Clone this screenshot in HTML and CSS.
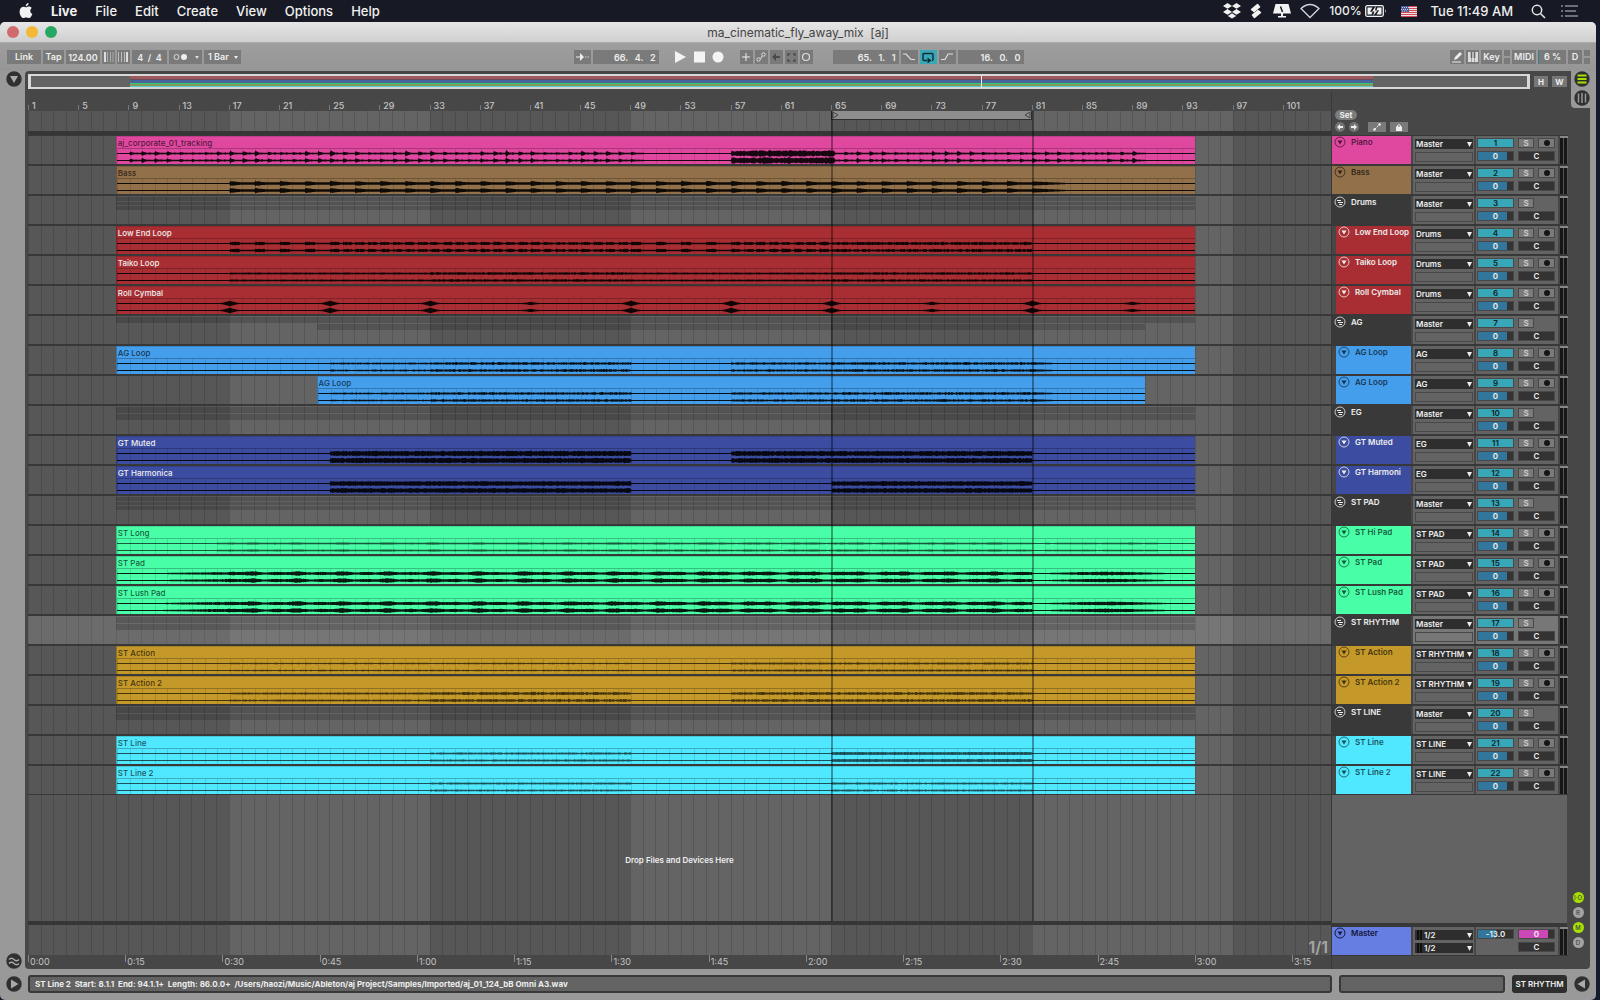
FILE: index.html
```html
<!DOCTYPE html>
<html lang="en">
<head>
<meta charset="utf-8">
<title>ma_cinematic_fly_away_mix [aj]</title>
<link rel="stylesheet" href="styles.css">
</head>
<body>
<nav class="menubar" aria-label="Menu bar">
  <div class="menus">
    <svg class="apple" viewBox="0 0 14 16" width="14" height="16"><path fill="#f2f2f2" d="M9.6 0c.1 1.700-1.300 3.300-2.900 3.300C6.500 1.700 8 .2 9.600 0zM7 4.300c.7 0 1.600-.8 3-.8 1.100 0 2.200.6 2.900 1.600-2.400 1.400-2 4.900.5 5.900-.6 1.700-2 4.100-3.400 4.100-1.100 0-1.500-.7-2.800-.7s-1.800.7-2.800.7C2.600 15.100.6 11.700.6 8.700c0-3.200 2-4.900 3.900-4.900 1.100 0 1.900.5 2.500.5z"/></svg>
    <a class="app" href="#">Live</a><a href="#">File</a><a href="#">Edit</a><a href="#">Create</a><a href="#">View</a><a href="#">Options</a><a href="#">Help</a>
  </div>
  <div class="extras">
    <svg width="18" height="16" viewBox="0 0 18 16" fill="#f2f2f2"><path d="M4.500 0 9 2.900 4.500 5.800 0 2.900zM13.500 0 18 2.900 13.500 5.800 9 2.900zM4.500 6 9 8.900 4.500 11.800 0 8.900zM13.500 6 18 8.900 13.500 11.800 9 8.900zM9 10.200l4.200 2.700L9 15.600l-4.200-2.700z"/></svg>
    <svg class="ex-s" width="12" height="16" viewBox="0 0 12 16" fill="#f2f2f2" stroke="#f2f2f2" stroke-width="1.500" stroke-linejoin="round"><path d="M7.500 1.500l2 2.500L4 8.500 1.500 6.500zM4.500 14.500l-2-2.500L8 7.500l2.500 2z"/></svg>
    <svg class="ex-d" width="18" height="16" viewBox="0 0 18 16"><path fill="#f2f2f2" d="M2.500 1h13L18 10.500H0zM8 10h2v3h3v1.500H5V13h3z"/><path d="M7.500 3.500 9.500 9" stroke="#171a24" stroke-width="1.500"/></svg>
    <svg class="ex-w" width="20" height="16" viewBox="0 0 20 16"><path d="M1 5.500Q10-2.500 19 5.500L10 14.500z" fill="none" stroke="#d5d5d8" stroke-width="1.300"/></svg>
    <span class="pct">100%</span>
    <svg class="ex-b" width="22" height="14" viewBox="0 0 22 14"><rect x=".7" y="1.700" width="17.600" height="10.600" rx="1.500" fill="none" stroke="#f2f2f2" stroke-width="1.300"/><path d="M2.500 3.500h5L5 7.800h2.500L6.500 10.500h-4zM16.500 10.500h-5L14 6.300h-2.500l1-2.800h4z" fill="#f2f2f2"/><path d="M11 2 7 7.600h2.500L8 12l4.500-5.500H10z" fill="#f2f2f2"/><path d="M20 5v4q1.500-2 0-4z" fill="#f2f2f2"/></svg>
    <svg class="ex-f" width="16" height="11" viewBox="0 0 16 11"><path fill="#eee3e3" d="M0 0h16v11H0z"/><path stroke="#d34a55" d="M0 .5h16M0 2.500h16M0 4.500h16M0 6.500h16M0 8.500h16M0 10.500h16"/><path fill="#4c5d9b" d="M0 0h8v6H0z"/><path stroke="#c8cde2" stroke-dasharray="1 1" d="M1 1.500h7M0 3.500h7M1 5h6"/></svg>
    <span class="clock">Tue 11:49 AM</span>
    <svg class="ex-q" width="15" height="15" viewBox="0 0 15 15" fill="none" stroke="#e8e8e8" stroke-width="1.500"><circle cx="6" cy="6" r="4.700"/><path d="m9.500 9.500 4.500 4.500"/></svg>
    <svg class="ex-l" width="18" height="12" viewBox="0 0 18 12" stroke="#8b8d94" stroke-width="1.500"><path d="M0 1h2M4 1h13M0 6h2M4 6h11M0 11h2M4 11h13"/></svg>
  </div>
</nav>

<main class="window">
  <header class="titlebar">
    <div class="lights"><button class="close" aria-label="Close"></button><button class="mini" aria-label="Minimise"></button><button class="full" aria-label="Zoom"></button></div>
    <h1>ma_cinematic_fly_away_mix&nbsp; [aj]</h1>
  </header>

  <section class="toolbar" aria-label="Control bar">
    <div class="group">
      <button class="w34">Link</button><button class="w20">Tap</button>
      <input class="w34" aria-label="Tempo" value="124.00">
      <button class="w13" aria-label="Nudge down"><svg width="11" height="10" viewBox="0 0 11 10"><path stroke="#ddd" stroke-width="2" d="M2 0v10"/><path stroke="#aaa" d="M4.500 0v10M7.500 0v10M10 0v10"/></svg></button>
      <button class="w13" aria-label="Nudge up"><svg width="11" height="10" viewBox="0 0 11 10"><path stroke="#ddd" stroke-width="2" d="M9 0v10"/><path stroke="#bbb" d="M.5 0v10M3.500 0v10M6.500 0v10"/></svg></button>
      <input class="w35" aria-label="Time signature" value="4  /  4">
      <button class="w33 metro" aria-label="Metronome"><svg width="26" height="8" viewBox="0 0 26 8"><circle cx="3.500" cy="4" r="2.500" fill="none" stroke="#ddd"/><circle cx="11" cy="4" r="3" fill="#eee"/><path d="M22 3h4l-2 3z" fill="#ddd"/></svg></button>
      <span class="pick quant"><select aria-label="Quantization"><option>1 Bar</option></select></span>
    </div>
    <div class="group center">
      <button class="w17" aria-label="Follow"><svg width="13" height="8" viewBox="0 0 13 8"><path d="M0 4h4" stroke="#eee"/><path d="m4 0 4 4-4 4z" fill="#eee"/><path d="M9 4h4" stroke="#ccc" stroke-dasharray="1.500 1"/></svg></button>
      <input class="pos" aria-label="Arrangement position" value="66.   4.   2">
      <button class="plain play" aria-label="Play"><svg width="11" height="12" viewBox="0 0 11 12"><path d="M0 0v12l11-6z" fill="#f4f4f4"/></svg></button>
      <button class="plain" aria-label="Stop"><svg width="11" height="12" viewBox="0 0 11 12"><path d="M0 .5h11v11H0z" fill="#f4f4f4"/></svg></button>
      <button class="plain rec" aria-label="Record"><svg width="12" height="12" viewBox="0 0 12 12"><circle cx="6" cy="6" r="5.500" fill="#f4f4f4"/></svg></button>
      <button class="w13" aria-label="Overdub"><svg width="10" height="10" viewBox="0 0 10 10"><path d="M5 1v8M1 5h8" stroke="#eee"/></svg></button>
      <button class="w13" aria-label="Automation arm"><svg width="10" height="10" viewBox="0 0 10 10" fill="none" stroke="#ddd"><circle cx="2.500" cy="7.500" r="1.700"/><circle cx="7.500" cy="2.500" r="1.700"/><path d="M4 6.500q2 0 2-2.500"/></svg></button>
      <button class="w13" aria-label="Re-enable automation"><svg width="8" height="8" viewBox="0 0 8 8"><path d="M4 0 0 4l4 4V5h4V3H4z" fill="#4a4a4a"/></svg></button>
      <button class="w13" aria-label="Capture"><svg width="9" height="9" viewBox="0 0 9 9" fill="none" stroke="#4a4a4a" stroke-width="1.300"><path d="M1 3V1h2M6 1h2v2M8 6v2H6M3 8H1V6"/></svg></button>
      <button class="w13 last" aria-label="Session record"><svg width="10" height="10" viewBox="0 0 10 10"><circle cx="5" cy="5" r="3.500" fill="none" stroke="#ddd" stroke-width="1.200"/></svg></button>
      <input class="pos" aria-label="Loop start" value="65.   1.   1">
      <button class="w17" aria-label="Punch in"><svg width="12" height="8" viewBox="0 0 12 8"><path d="M0 1h3l5 5.500h4" fill="none" stroke="#ddd" stroke-width="1.200"/></svg></button>
      <button class="w17 on" aria-label="Loop"><svg width="12" height="11" viewBox="0 0 12 11"><path d="M5 8.500H2q-1 0-1-1v-5q0-1 1-1h8q1 0 1 1v5q0 1-1 1" fill="none" stroke="#0d2b30" stroke-width="1.400"/><path d="M5.500 5.500v6l4-3z" fill="#0d2b30"/></svg></button>
      <button class="w17" aria-label="Punch out"><svg width="12" height="8" viewBox="0 0 12 8"><path d="M0 6.500h4l3-5.500h5" fill="none" stroke="#ddd" stroke-width="1.200"/></svg></button>
      <input class="pos" aria-label="Loop length" value="16.   0.   0">
    </div>
    <div class="group right">
      <button class="w14" aria-label="Draw mode"><svg width="11" height="11" viewBox="0 0 11 11"><path d="m2 8 1-3 5-5 2 2-5 5z" fill="#eee"/><path d="M0 10h9" stroke="#eee"/></svg></button>
      <button class="w13" aria-label="Computer MIDI keyboard"><svg width="10" height="10" viewBox="0 0 10 10"><path d="M0 0h10v10H0z" fill="#ddd"/><path d="M3.500 0v6M6.500 0v6" stroke="#666" stroke-width="1.600"/><path d="M3.500 6v4M6.500 6v4" stroke="#888" stroke-width=".7"/></svg></button>
      <button class="w20">Key</button><i class="leds"></i><button class="w24">MIDI</button><output class="cpu">6 %</output><button class="w14">D</button><i class="leds"></i>
    </div>
  </section>

  <section class="body">
    <aside class="gutter">
      <button class="round" aria-label="Show browser"><svg width="16" height="16" viewBox="0 0 16 16"><circle cx="8" cy="8" r="7.700" fill="#303030"/><path d="M4 5h8l-4 7z" fill="#aaa"/></svg></button>
      <button class="round" aria-label="Groove pool"><svg width="16" height="16" viewBox="0 0 16 16"><circle cx="8" cy="8" r="7.700" fill="#303030"/><path d="M3 6.500q2.500-2.500 5 0t5 0M3 10.500q2.500-2.500 5 0t5 0" fill="none" stroke="#aaa" stroke-width="1.400"/></svg></button>
    </aside>
    <div class="arranger">
      <div class="overview-row">
        <div class="overview"><div class="minimap"></div><i class="playpos"></i></div>
        <button class="hw">H</button><button class="hw">W</button>
      </div>
      <div class="views">
        <button class="round" aria-label="Arrangement view"><svg width="16" height="16" viewBox="0 0 16 16"><circle cx="8" cy="8" r="7.700" fill="#303030"/><path d="M3.500 4.500h9M3.500 8h9M3.500 11.500h9" stroke="#a6e000" stroke-width="2"/></svg></button>
        <button class="round" aria-label="Session view"><svg width="16" height="16" viewBox="0 0 16 16"><circle cx="8" cy="8" r="7.700" fill="#303030"/><path d="M4.500 3.500v9M8 3v10M11.500 3.500v9" stroke="#999" stroke-width="1.500"/></svg></button>
      </div>
      <div class="timeline">
        <div class="ruler" id="ruler"></div>
        <div class="gridded">
          <div class="scrub"><div class="brace"><svg width="7" height="8" viewBox="0 0 7 8"><path d="m1 1 5 3-5 3z" fill="none" stroke="#444"/></svg><svg width="7" height="8" viewBox="0 0 7 8"><path d="M6 1 1 4l5 3z" fill="none" stroke="#444"/></svg></div></div>
          <div class="strip"></div>
          <div id="lanes"></div>
          <div class="empty"><p>Drop Files and Devices Here</p></div>
          <div class="strip"></div>
          <div class="masterlane"><span>1/1</span></div>
          <i class="locator start"></i><i class="locator end"></i>
        </div>
        <div class="ruler time" id="time"></div>
      </div>
      <div class="headers">
        <div class="setbar">
          <button class="set">Set</button>
          <div class="locbtns">
            <button class="dot" aria-label="Previous locator"><svg width="8" height="8" viewBox="0 0 8 8"><path d="M4 1 1 4l3 3V5h3V3H4z" fill="#eee"/></svg></button>
            <button class="dot" aria-label="Next locator"><svg width="8" height="8" viewBox="0 0 8 8"><path d="m4 1 3 3-3 3V5H1V3h3z" fill="#eee"/></svg></button>
            <button class="sq" aria-label="Automation mode"><svg width="8" height="8" viewBox="0 0 8 8"><circle cx="1.500" cy="6.500" r="1.300" fill="#eee"/><circle cx="6.500" cy="1.500" r="1.300" fill="#eee"/><path d="m1.500 6.500 5-5" stroke="#eee" stroke-dasharray="2 1"/></svg></button>
            <button class="sq" aria-label="Lock envelopes"><svg width="8" height="8" viewBox="0 0 8 8"><path d="M1 3.500h6V8H1z" fill="#eee"/><path d="M2.500 4V2.500q1.500-2 3 0V4" fill="none" stroke="#eee"/></svg></button>
          </div>
        </div>
        <div id="heads"></div>
        <div class="blank"></div>
        <div class="head master">
          <div class="name"><svg class="fold" width="12" height="12" viewBox="0 0 12 12"><circle cx="6" cy="6" r="5" fill="none" stroke="currentColor"/><path d="M3.500 4.500h5L6 8.500z" fill="currentColor"/></svg><span>Master</span></div>
          <div class="io"><span class="pick"><select class="outs" aria-label="Cue out"><option>1/2</option></select></span><span class="pick"><select class="outs" aria-label="Master out"><option>1/2</option></select></span></div>
          <div class="mix"><input class="vol db" aria-label="Master volume" value="-13.0"><input class="cue" aria-label="Cue volume" value="0"><button class="pan">C</button></div>
          <div class="meter"></div>
        </div>
      </div>
      <div class="side">
        <button class="chip lit" aria-label="I-O">I·O</button><button class="chip">R</button><button class="chip lit">M</button><button class="chip">D</button>
      </div>
    </div>
  </section>

  <footer class="status">
    <button class="round" aria-label="Info view"><svg width="16" height="16" viewBox="0 0 16 16"><circle cx="8" cy="8" r="7.700" fill="#303030"/><path d="M5 3.500v9L12.500 8z" fill="#aaa"/></svg></button>
    <output class="field info">ST Line 2&nbsp; Start: 8.1.1&nbsp; End: 94.1.1+&nbsp; Length: 86.0.0+&nbsp; /Users/haozi/Music/Ableton/aj Project/Samples/Imported/aj_01_124_bB Omni A3.wav</output>
    <div class="field clipview"></div>
    <button class="device">ST RHYTHM</button>
    <button class="round" aria-label="Detail view"><svg width="16" height="16" viewBox="0 0 16 16"><circle cx="8" cy="8" r="7.700" fill="#303030"/><path d="M11 3.500v9L3.500 8z" fill="#aaa"/></svg></button>
  </footer>
</main>
<script src="app.js"></script>
</body>
</html>
```
FILE: styles.css
```css
:root {
  --total: 103.84; /* bars visible in the timeline */
  --dark: #474747;
  --line: #383838;
  --teal: #38a7b8;
}
* { box-sizing: border-box; }
body {
  margin: 0;
  min-height: 100vh;
  display: flex;
  flex-direction: column;
  background: #141b2c;
  font: 500 8px/10px Inter, "Liberation Sans", sans-serif;
  color: #eee;
}
button, input, select {
  font: inherit;
  color: inherit;
  border: 0;
  border-radius: 0;
  padding: 0;
  margin: 0;
  background: none;
  appearance: none;
  min-width: 0;
}
svg { display: block; flex: none; }

/* macOS menu bar */
.menubar {
  height: 22px;
  display: flex;
  justify-content: space-between;
  align-items: center;
  padding: 0 21px 0 19px;
  background: #171a24;
  font-size: 13px;
  line-height: 20px;
}
.menus, .extras { display: flex; align-items: center; }
.menus { gap: 18px; }
.menus a { color: #f2f2f2; text-decoration: none; }
.menus .app { font-weight: 700; }
.extras .ex-s { margin-left: 9px; }
.extras .ex-d { margin-left: 11px; }
.extras .ex-w { margin-left: 9px; }
.pct { margin-left: 9px; font-size: 12px; }
.extras .ex-b { margin-left: 3px; }
.extras .ex-f { margin-left: 14px; }
.clock { margin-left: 14px; }
.extras .ex-q { margin-left: 18px; }
.extras .ex-l { margin-left: 15px; }

.window {
  flex: 1;
  display: flex;
  flex-direction: column;
  margin-right: 4px;
  border-radius: 5px;
  background: #999;
  overflow: hidden;
}
.titlebar {
  height: 21px;
  display: grid;
  grid-template-columns: 1fr auto 1fr;
  align-items: center;
  padding: 0 7px;
  background: linear-gradient(#e6e6e6, #cfcfcf);
  border-bottom: 1px solid #aaa;
}
.titlebar h1 { margin: 0; padding-top: 1px; font-size: 12px; font-weight: 400; line-height: 18px; color: #444; }
.lights { display: flex; gap: 7px; }
.lights button { width: 12px; height: 12px; border-radius: 6px; }
.close { background: #cf6a6e; }
.mini { background: #f3b936; }
.full { background: #27a862; }

/* control bar */
.toolbar {
  height: 28px;
  display: grid;
  grid-template-columns: 1fr auto 1fr;
  align-items: center;
  padding: 0 6px 0 7px;
  background: linear-gradient(#9e9e9e, #969696);
  font-weight: 600;
  font-size: 9px;
}
.group { display: flex; align-items: center; gap: 2px; height: 14px; }
.group > * { height: 14px; background-color: #7a7a7a; text-align: center; }
.group button { display: flex; align-items: center; justify-content: center; }
.group .plain { background: none; }
.group.right { justify-content: flex-end; }
.w13 { width: 13px; }
.w14 { width: 14px; }
.w17 { width: 17px; }
.w20 { width: 21px; }
.w24 { width: 24px; }
.w33 { width: 33px; }
.w34 { width: 34px; }
.w35 { width: 35px; white-space: pre; }
.pos { width: 66px; padding-right: 3px; white-space: pre; text-align: right !important; }
.play { margin-left: 11px; }
.group .plain { width: 17px; }
.rec { margin-right: 11px; }
.last { margin-right: 18px; }
.group .on { background: var(--teal); }
.leds { width: 6px; background: linear-gradient(#7a7a7a 6px, #999 6px 8px, #7a7a7a 8px); }
.cpu { width: 28px; padding: 2px 0 0; border-left: 1px solid #35808c; }

.pick { position: relative; display: block; }
.pick::after {
  content: "";
  position: absolute;
  right: 1px;
  top: 3px;
  width: 5px;
  height: 5px;
  background: #eee;
  clip-path: polygon(0 0, 100% 0, 50% 100%);
  pointer-events: none;
}
.pick select { display: block; width: 100%; height: 100%; padding-left: 1px; }
.quant { width: 37px; }
.quant select { padding-left: 4px; }
.quant::after { right: 3px; top: 6px; width: 4px; height: 3px; }

/* main body */
.body { flex: 1; display: flex; padding-right: 6px; }
.gutter {
  width: 25px;
  padding: 0 0 0 6px;
  display: flex;
  flex-direction: column;
  justify-content: space-between;
}
.round { width: 16px; height: 16px; }
.arranger {
  flex: 1;
  display: grid;
  grid-template-columns: minmax(0, 1fr) 237px 22px;
  grid-template-rows: 21px 16px 1fr;
  padding-left: 3px;
  border-radius: 4px;
  background: var(--dark);
}
.overview-row { grid-area: 1 / 1 / 2 / 3; display: flex; gap: 4px; padding: 3px 1px 3px 0; }
.overview {
  position: relative;
  flex: 1;
  border: 2px solid #d8d8d8;
  border-left-width: 3px;
  border-right-width: 3px;
  background: #636363;
}
.minimap {
  height: 100%;
  margin: 0 10.300% 0 6.600%;
  background: linear-gradient(#9c5a5c 3px, #6d4b5c 3px 4px, #3b65a8 4px 5px, #4d6690 5px 7px, #33c68a 7px 8px, #7e9c53 8px 10px, #5cc9d0 10px);
}
.playpos { position: absolute; left: 63.500%; top: 0; bottom: 0; width: 1px; background: #eee; }
.hw { width: 14px; height: 11px; margin-top: 2px; background: #767676; font-weight: 700; }
.hw + .hw { width: 15px; }
.views {
  grid-area: 1 / 3 / 3 / 4;
  display: flex;
  flex-direction: column;
  gap: 3px;
  margin: 0 -6px 0 3px;
  padding-left: 3px;
  border-radius: 0 0 0 4px;
  background: #999;
}
.timeline { grid-area: 2 / 1 / 4 / 2; display: flex; flex-direction: column; }
.headers { grid-area: 2 / 2 / 4 / 3; display: flex; flex-direction: column; border-left: 1px solid var(--line); }
.side { grid-area: 3 / 3 / 4 / 4; display: flex; flex-direction: column; justify-content: flex-end; align-items: center; gap: 4px; padding: 0 2px 21px 0; }
.chip { width: 11px; height: 11px; border-radius: 6px; background: #a2a2a2; color: #444; font-size: 6px; text-align: center; }
.chip.lit { background: #a6e000; }

.ruler { height: 19px; display: flex; align-items: flex-end; overflow: hidden; color: #c4c4c4; font-size: 9px; }
.ruler span { flex: none; height: 13px; padding: 3px 0 0 4px; background: linear-gradient(#777, #777) 0 7px / 1px 5px no-repeat; }
.time { height: 14px; align-items: flex-start; }
.time span { padding: 2px 0 0 2px; background: linear-gradient(#888, #888) 0 0 / 1px 7px no-repeat; font-weight: 400; }

.gridded {
  position: relative;
  flex: 1;
  display: flex;
  flex-direction: column;
  background:
    repeating-linear-gradient(to right, rgba(0,0,0,.14) 0 1px, transparent 1px calc(100% / var(--total))),
    repeating-linear-gradient(to right, #575757 0 calc(100% * 16 / var(--total)), #646464 0 calc(100% * 32 / var(--total)));
}
.scrub { height: 20px; }
.brace {
  display: flex;
  justify-content: space-between;
  height: 9px;
  margin-left: calc(100% * 64 / var(--total));
  width: calc(100% * 16 / var(--total));
  background: #8e8e8e;
  border: 1px solid #2e2e2e;
  border-top-width: 0;
}
.strip { height: 4px; background: #363636; }
.empty { flex: 1; display: flex; align-items: center; justify-content: center; padding-top: 4px; font-weight: 600; }
.empty p { margin: 0; }
.masterlane { height: 30px; display: flex; justify-content: flex-end; align-items: flex-end; padding: 0 3px 0 0; font-size: 16px; font-weight: 600; line-height: 16px; color: #a6a6a6; }
.locator { position: absolute; top: 0; bottom: 34px; width: 2px; background: rgba(0,0,0,.36); }
.locator.start { left: calc(100% * 64 / var(--total)); }
.locator.end { left: calc(100% * 80 / var(--total)); }

.lane { height: 30px; border-top: 1px solid var(--line); border-bottom: 1px solid var(--line); }
.lane.selected { background: rgba(255,255,255,.12); }
.lane.group-lane { display: flex; flex-direction: column; gap: 1px; padding: 1px 0 14px; }
.ghost { flex: 1; background: rgba(0,0,0,.16); }
.clip {
  height: 28px;
  display: flex;
  flex-direction: column;
  border-left: 1px solid rgba(0,0,0,.25);
  background: var(--c);
  color: var(--ink);
}
.clip b { height: 13px; padding: 1px 0 0 1px; font-weight: 500; border-top: 1px solid rgba(0,0,0,.15); border-bottom: 1px solid rgba(0,0,0,.25); white-space: nowrap; }
.clip svg { width: 100%; height: 15px; background: repeating-linear-gradient(to right, rgba(0,0,0,.12) 0 1px, transparent 1px calc(100% / var(--bars))); }

/* track headers */
.setbar { height: 43px; padding: 18px 0 0 3px; }
.set { display: block; width: 22px; height: 10px; border-radius: 5px; background: #7c7c7c; font-weight: 700; }
.locbtns { display: flex; align-items: center; gap: 4px; margin-top: 2px; }
.dot { width: 10px; height: 10px; border-radius: 5px; background: #737373; padding: 1px; }
.sq { width: 18px; height: 10px; background: #7a7a7a; padding: 1px 5px; }
.dot + .sq { margin-left: 5px; }
.head {
  height: 30px;
  display: grid;
  grid-template-columns: 79px 61px 82px 8px;
  column-gap: 2px;
  border-top: 1px solid var(--line);
  border-bottom: 1px solid var(--line);
}
.name { display: flex; align-items: flex-start; gap: 5px; padding: 0 0 0 2px; background: var(--c); color: var(--ink); font-weight: 600; overflow: hidden; white-space: nowrap; }
.name span { padding-top: 1px; }
.child .name { margin-left: 4px; }
.io, .mix, .meter { background: #636363; }
.selected .io, .selected .mix { background: #777; }
.io { display: grid; grid-template-rows: 10px 10px; row-gap: 3px; padding: 3px 1px 0 2px; font-weight: 600; }
.io .pick { background: #2e2e2e; }
.chan { border: 1px solid #484848; }
.mix { display: grid; grid-template-columns: 37px 16px 17px; grid-template-rows: 10px 10px; column-gap: 4px; row-gap: 3px; padding: 2px 0 0 1px; font-weight: 600; }
.mix > * { width: 100%; height: 10px; text-align: center; border: 1px solid #484848; line-height: 8px; }
.mix .num { background: var(--teal); color: #0f2226; }
.mix .solo { background: #7a7a7a; color: #ccc; }
.mix .arm { background: #7a7a7a; padding: 1px 5px; }
.vol { grid-area: 2 / 1; background: linear-gradient(to right, #32779b 83%, #333 83%); }
.pan { grid-area: 2 / 2 / 3 / 4; background: #333; }
.meter { border-top: 2px solid #888; background: linear-gradient(to right, #161616 3px, #555 3px 4px, #161616 4px 7px, #555 7px); }
.blank { flex: 1; background: #636363; border-bottom: 3px solid var(--line); margin-right: 1px; }
.master { --c: #667ee2; --ink: #14183a; margin-bottom: 13px; }
.outs { padding-left: 9px !important; background: linear-gradient(to right, transparent 2px, #111 2px 4px, transparent 4px 5px, #111 5px 7px, transparent 7px); }
.db { grid-area: 1 / 1; background: linear-gradient(to right, #32779b 52%, #333 52%); }
.cue { grid-area: 1 / 2 / 2 / 4; background: linear-gradient(to right, #cc48b8 83%, #333 83%); }

/* status bar */
.status { height: 31px; display: flex; align-items: center; gap: 7px; padding: 0 6px 2px; font-weight: 600; }
.field { height: 18px; border: 2px solid #383838; border-radius: 3px; background: #636363; }
.info { flex: 1; margin-left: -1px; padding: 2px 5px; font-weight: 700; white-space: nowrap; overflow: hidden; }
.clipview { width: 166px; }
.device { width: 55px; height: 18px; border-radius: 3px; background: #2e2e2e; }
.status .round:last-child { margin: 0; }
```
FILE: app.js
```js
const TOTAL = 103.84;
const DARK_INK = "rgba(0,0,0,.68)", LIGHT_INK = "#eee";

// wave: list of [kind, from bar, to bar, amplitude]
const tracks = [
  { name: "Piano", clip: "aj_corporate_01_tracking", color: "#e048a0", out: "Master",
    wave: [["hit", 9, 17, 1.5], ["hit", 17, 50, 2.3], ["dense", 57, 65.2, 2.9], ["hit", 65, 90, 1.9]] },
  { name: "Bass", color: "#92704a", out: "Master", wave: [["pluck", 17, 81, 2.4], ["tail", 81, 84, 1.6]] },
  { name: "Drums", group: [[8, 94], [8, 94], [8, 94]] },
  { name: "Low End Loop", color: "#a82e33", light: 1, out: "Drums",
    wave: [["gate", 17, 25, 1.4], ["loop", 25, 49, 1.4], ["gate", 49, 57, 1.4], ["loop", 57, 65, 1.5], ["noise", 65, 81, 1.3]] },
  { name: "Taiko Loop", color: "#a82e33", light: 1, out: "Drums",
    wave: [["loop", 17, 33, .6], ["noise", 33, 49, 1], ["loop", 49, 65, .6], ["noise", 65, 81, .9]] },
  { name: "Roll Cymbal", color: "#a82e33", light: 1, out: "Drums", wave: [["roll", 8, 94, 2.4]] },
  { name: "AG", group: [[8, 94], [24, 90]] },
  { name: "AG Loop", color: "#449eeb", out: "AG",
    wave: [["noise", 25, 33, .5], ["noise", 33, 49, 1], ["noise", 57, 65, .8], ["noise", 65, 81, 1], ["tail", 81, 83, .8]] },
  { name: "AG Loop", color: "#449eeb", out: "AG", from: 24, to: 90,
    wave: [["noise", 25, 33, .5], ["noise", 33, 49, 1], ["noise", 57, 65, .8], ["noise", 65, 81, 1], ["tail", 81, 83, .8]] },
  { name: "EG", group: [[8, 94], [8, 94]] },
  { name: "GT Muted", color: "#3c4ca1", light: 1, out: "EG", wave: [["full", 25, 49, 2.3], ["full", 57, 81, 2.2]] },
  { name: "GT Harmoni", clip: "GT Harmonica", color: "#3c4ca1", light: 1, out: "EG", wave: [["full", 25, 49, 2], ["full", 65, 81, 2]] },
  { name: "ST PAD", group: [[8, 94], [8, 94], [8, 94]] },
  { name: "ST Hi Pad", clip: "ST Long", color: "#48ffa8", out: "ST PAD", soft: 1, wave: [["swell", 16, 81, .7], ["swell", 82, 91, .5]] },
  { name: "ST Pad", color: "#48ffa8", out: "ST PAD", wave: [["rise", 11, 17, 1.3], ["swell", 17, 81, 1.9], ["bump", 81, 93, 1.5]] },
  { name: "ST Lush Pad", color: "#48ffa8", out: "ST PAD", wave: [["rise", 11, 17, 1.5], ["swell", 17, 81, 2], ["bump", 81, 93, 1.5]] },
  { name: "ST RHYTHM", group: [[8, 94], [8, 94]], selected: 1 },
  { name: "ST Action", color: "#c49829", out: "ST RHYTHM", soft: 1, wave: [["noise", 17, 49, .3], ["noise", 57, 81, .6]] },
  { name: "ST Action 2", color: "#c49829", out: "ST RHYTHM", soft: 1, wave: [["noise", 17, 33, .6], ["noise", 33, 49, 1.2], ["noise", 57, 81, 1.1]] },
  { name: "ST LINE", group: [[8, 94], [8, 94]] },
  { name: "ST Line", color: "#50e8ff", out: "ST LINE", soft: 1, wave: [["noise", 33, 49, .7], ["full", 65, 81, 1.1]] },
  { name: "ST Line 2", color: "#50e8ff", out: "ST LINE", soft: 1, wave: [["noise", 33, 49, .6], ["noise", 65, 81, .6]] }
];

let seed = 7;
const rnd = () => (seed = (seed * 16807) % 2147483647) / 2147483647;

function level(kind, bar, start, end, amp) {
  const r = rnd(), f = bar - Math.floor(bar), half = (bar * 2) % 1;
  switch (kind) {
    case "noise": return amp * (.2 + .8 * r);
    case "full": return amp * (.6 + .4 * r);
    case "dense": return amp * (.5 + .5 * r);
    case "hit": {
      const strength = .2 + .8 * Math.abs(Math.sin(Math.floor(bar) * 2.7));
      return .25 + amp * strength * Math.max(0, 1 - f * 2.2) * (.6 + .4 * r) + (half < .3 ? .5 * r : 0);
    }
    case "pluck": {
      const p = ((bar - 1) % 2) / 2;
      return .9 + (amp - .9) * Math.max(0, 1 - p * 2.5) * (.5 + .5 * r);
    }
    case "gate": return (bar - 1) % 2 < .8 ? amp * (.6 + .4 * r) : .2;
    case "loop": return f < .75 ? amp * (.4 + .6 * r) : .2;
    case "swell": return amp * (.65 + .35 * Math.sin(bar * 2.6) * Math.sin(bar * .9)) * (.7 + .3 * r);
    case "rise": return amp * ((bar - start) / (end - start)) * (.5 + .5 * r);
    case "tail": return amp * (1 - (bar - start) / (end - start));
    case "bump": return amp * Math.sin(Math.PI * (bar - start) / (end - start)) ** 2 * (.6 + .4 * r);
    case "roll": {
      const c = Math.round((bar - 1) / 8) * 8 + 1;
      if (c < 17) return 0;
      const weak = c === 41 || c === 73 || c === 89 ? .5 : 1;
      return weak * amp * Math.max(0, 1 - Math.abs(bar - c) / .9) ** 1.6;
    }
  }
}

function wavePath(t, from, to, mid) {
  const step = .08, top = [], low = [];
  for (let bar = from; bar <= to; bar += step) {
    let a = 0;
    for (const [kind, s, e, amp] of t.wave) if (bar >= s && bar < e) a = Math.max(a, level(kind, bar, s, e, amp));
    const x = ((bar - from) * 12.5).toFixed(1);
    top.push(x + " " + (mid - .45 - a).toFixed(2));
    low.unshift(x + " " + (mid + .45 + a).toFixed(2));
  }
  return "M" + top.concat(low).join("L") + "z";
}

const pct = bars => (bars / TOTAL * 100).toFixed(3) + "%";
const arrow = '<path d="M3.500 4.500h5L6 8.500z" fill="currentColor"/>';
const stack = '<path d="M3 4.500h4M4 6.500h5M5 8.500h3" stroke="currentColor"/>';

let lanes = "", heads = "";
tracks.forEach((t, i) => {
  const sel = t.selected ? " selected" : "";
  if (t.group) {
    lanes += `<div class="lane group-lane${sel}">` + t.group.map(([a, b]) =>
      `<div class="ghost" style="margin-left:${pct(a - 1)};width:${pct(b - a)}"></div>`).join("") + "</div>";
  } else {
    const from = t.from || 8, to = t.to || 94, w = (to - from) * 12.5;
    lanes += `<div class="lane"><div class="clip" style="--c:${t.color};--ink:${t.light ? LIGHT_INK : DARK_INK};--bars:${to - from};margin-left:${pct(from - 1)};width:${pct(to - from)}">
      <b>${t.clip || t.name}</b><svg viewBox="0 0 ${w} 15" preserveAspectRatio="none"><path fill="#000" fill-opacity="${t.soft ? .65 : .9}" d="${wavePath(t, from, to, 4.5)}${wavePath(t, from, to, 11.5)}"/></svg></div></div>`;
  }
  const color = t.group ? "#393939" : t.color, ink = t.group || t.light ? LIGHT_INK : DARK_INK;
  heads += `<div class="head${sel}${!t.group && i > 1 ? " child" : ""}" style="--c:${color};--ink:${ink}">
    <div class="name"><svg width="12" height="12" viewBox="0 0 12 12"><circle cx="6" cy="6" r="5" fill="none" stroke="currentColor" stroke-opacity=".8"/>${t.group ? stack : arrow}</svg><span>${t.name}</span></div>
    <div class="io"><span class="pick"><select aria-label="${t.name} output"><option>${t.out || "Master"}</option></select></span><span class="chan"></span></div>
    <div class="mix"><button class="num">${i + 1}</button><button class="solo">S</button>${t.group ? "" : `<button class="arm" aria-label="Arm"><svg width="6" height="6" viewBox="0 0 6 6"><circle cx="3" cy="3" r="3" fill="#151515"/></svg></button>`}<input class="vol" aria-label="${t.name} volume" value="0"><button class="pan">C</button></div>
    <div class="meter"></div></div>`;
});
document.getElementById("lanes").innerHTML = lanes;
document.getElementById("heads").innerHTML = heads;

let bars = "";
for (let b = 1; b < 104; b += 4) bars += `<span style="width:${pct(4)}">${b}</span>`;
document.getElementById("ruler").innerHTML = bars;

let time = "";
for (let s = 0; s <= 195; s += 15) time += `<span style="width:${pct(7.75)}">${Math.floor(s / 60)}:${String(s % 60).padStart(2, "0")}</span>`;
document.getElementById("time").innerHTML = time;
```
